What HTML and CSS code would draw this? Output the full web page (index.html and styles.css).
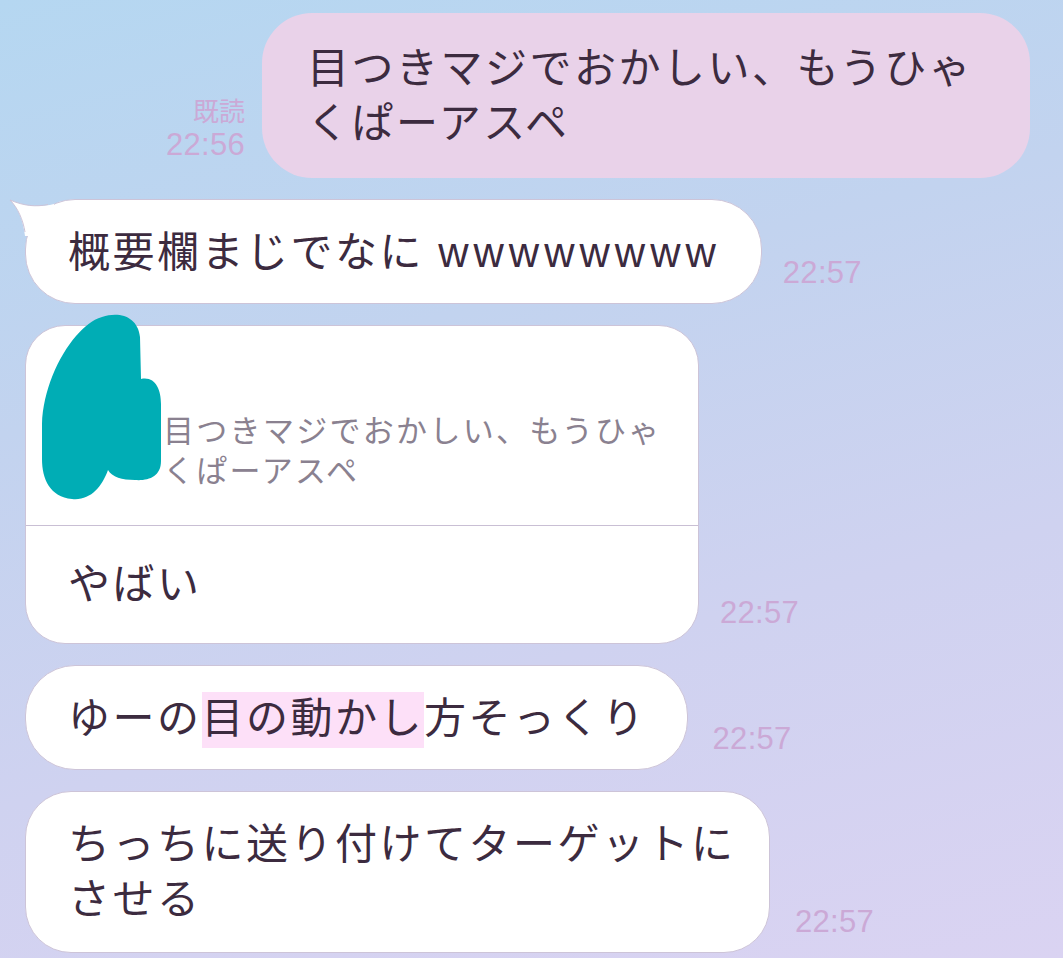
FILE: index.html
```html
<!DOCTYPE html>
<html lang="ja">
<head>
<meta charset="utf-8">
<title>LINE chat</title>
<link rel="stylesheet" href="styles.css">
</head>
<body>
<main class="chat">
  <div class="row row-sent">
    <div class="meta meta-sent">
      <span class="read">既読</span>
      <span class="time">22:56</span>
    </div>
    <div class="bubble bubble-sent">目つきマジでおかしい、もうひゃくぱーアスペ</div>
  </div>

  <div class="row row-recv">
    <div class="bubble bubble-recv bubble-first">
      <svg class="tail" width="48" height="40" viewBox="0 0 48 40" aria-hidden="true">
        <path d="M46 6 C 30 10, 16 8, 2 2 C 10 10, 15 22, 17 38 L 46 38 Z" fill="#ffffff"/>
        <path d="M40 6.5 C 28 9, 16 8, 2 2 C 10 10, 15 22, 17 34" fill="none" stroke="#cdc4d8" stroke-width="1"/>
      </svg>
      概要欄まじでなに <span class="latin">wwwwwwww</span>
    </div>
    <span class="time">22:57</span>
  </div>

  <div class="row row-recv">
    <div class="bubble bubble-reply">
      <svg class="blot" width="150" height="200" viewBox="0 0 150 200" aria-hidden="true">
        <path d="M72 8 C 90 2, 108 8, 110 28 L 111 70 C 125 67, 131 80, 131 95 L 131 152 C 131 168, 118 172, 105 171 C 92 171, 82 168, 78 161 C 72 178, 60 192, 42 190 C 20 188, 12 170, 12 150 L 12 115 C 13 82, 28 48, 46 27 C 55 17, 62 11, 72 8 Z" fill="#00adb5"/>
      </svg>
      <div class="quote">目つきマジでおかしい、もうひゃくぱーアスペ</div>
      <div class="reply-text">やばい</div>
    </div>
    <span class="time">22:57</span>
  </div>

  <div class="row row-recv">
    <div class="bubble bubble-recv">ゆーの<mark class="hl">目の動かし</mark>方そっくり</div>
    <span class="time time-wide">22:57</span>
  </div>

  <div class="row row-recv">
    <div class="bubble bubble-recv bubble-wrap">ちっちに送り付けてターゲットにさせる</div>
    <span class="time time-wide">22:57</span>
  </div>
</main>
</body>
</html>
```

FILE: styles.css
```css
* { box-sizing: border-box; }

html, body {
  margin: 0;
  padding: 0;
}

body {
  width: 1063px;
  height: 958px;
  overflow: hidden;
  background: linear-gradient(165deg, #b5d7f1 0%, #c2d3ef 35%, #cfd2f0 65%, #dad3f2 100%);
  font-family: "Liberation Sans", "Noto Sans CJK JP", sans-serif;
  color: #3c2b3f;
}

.chat {
  display: flex;
  flex-direction: column;
  gap: 21px;
  padding: 13px 33px 0 25px;
}

.row {
  display: flex;
  align-items: flex-end;
}

.row-sent {
  justify-content: flex-end;
  gap: 17px;
}

.row-recv {
  gap: 21px;
}

.bubble {
  position: relative;
  font-size: 42px;
  line-height: 55px;
  letter-spacing: 2.5px;
  background: #ffffff;
  border: 1px solid #cdc4d8;
  border-radius: 50px;
  padding: 25px 40px 23px 42px;
}

.bubble-sent {
  width: 768px;
  background: #e9d2e9;
  border: none;
  padding: 28px 30px 27px 45px;
}

.bubble-wrap {
  width: 745px;
  border-radius: 46px;
  padding: 25px 30px 25px 42px;
}

.latin {
  letter-spacing: 5px;
}

.tail {
  position: absolute;
  left: -18px;
  top: -2px;
}

.hl {
  background: #fde0f8;
  color: inherit;
  padding: 3px 0 6px;
  letter-spacing: 2.5px;
}

.meta {
  display: flex;
  flex-direction: column;
  align-items: flex-end;
  padding-bottom: 16px;
  color: #cba9d6;
}

.read {
  font-family: "Noto Sans CJK JP", sans-serif;
  font-size: 26px;
  line-height: 36px;
}

.time {
  font-family: "Liberation Sans", sans-serif;
  font-size: 31px;
  line-height: 34px;
  letter-spacing: 0.3px;
  color: #cba9d6;
  margin-bottom: 14px;
}

.time-wide {
  margin-left: 4px;
}

.meta .time {
  margin-bottom: 0;
}

.bubble-reply {
  width: 674px;
  border-radius: 40px;
  padding: 0;
}

.blot {
  position: absolute;
  left: 4px;
  top: -17px;
}

.quote {
  font-family: "Liberation Sans", "Noto Sans CJK JP", sans-serif;
  font-size: 31px;
  line-height: 40px;
  letter-spacing: 2.3px;
  color: #8a8190;
  padding: 86px 30px 33px 137px;
  border-bottom: 1px solid #c9bfd4;
}

.reply-text {
  padding: 31px 40px 31px 42px;
}
```
